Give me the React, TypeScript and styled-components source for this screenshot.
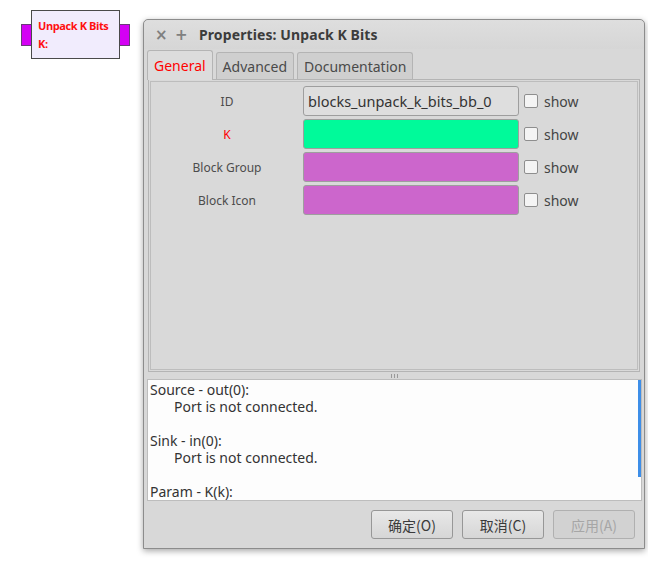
import styled, { createGlobalStyle } from 'styled-components';

const GlobalStyle = createGlobalStyle`
    html, body {
        margin: 0;
        padding: 0;
        background: #ffffff;
    }
    body {
        font-family: "Noto Sans", "Noto Sans CJK SC", sans-serif;
    }
`;

const Canvas = styled.div`
    position: relative;
    width: 648px;
    height: 569px;
    overflow: hidden;
    background: #ffffff;
`;

const Block = styled.div`
    position: absolute;
    left: 21px;
    top: 10px;
    display: flex;
    align-items: center;
`;

const Port = styled.div`
    width: 11px;
    height: 22px;
    background: #d400f4;
    border: 1px solid #6a3a7a;
    box-sizing: border-box;
`;

const BlockBody = styled.div`
    width: 89px;
    height: 49px;
    box-sizing: border-box;
    margin: 0 -1px;
    background: #f1ecfd;
    border: 1px solid #4a4a4a;
    padding: 6px 0 0 6px;
    font-family: "Open Sans", sans-serif;
    font-weight: 700;
    font-size: 11px;
    line-height: 18px;
    letter-spacing: -0.4px;
    color: #ff1010;
    position: relative;
    z-index: 1;
`;

const Dialog = styled.div`
    position: absolute;
    left: 143px;
    top: 19px;
    width: 502px;
    height: 530px;
    box-sizing: border-box;
    border: 1px solid #8c8c8c;
    border-radius: 5px 5px 0 0;
    background: #d8d8d8;
    box-shadow: 0 2px 6px rgba(0, 0, 0, 0.35);
    display: flex;
    flex-direction: column;
`;

const TitleBar = styled.div`
    height: 29px;
    display: flex;
    align-items: center;
    padding-left: 11px;
    background: linear-gradient(#dedede, #d6d6d6);
    border-radius: 5px 5px 0 0;
    color: #3c3c3c;
`;

const TitleButton = styled.span`
    width: 20px;
    font-size: 15px;
    font-family: "DejaVu Sans", sans-serif;
    color: #808080;
    font-weight: 700;
`;

const Title = styled.span`
    margin-left: 4px;
    font-weight: 700;
    font-size: 14px;
    letter-spacing: 0.1px;
`;

const Content = styled.div`
    flex: 1;
    display: flex;
    flex-direction: column;
    padding: 0 3px 0 3px;
`;

const TabRow = styled.div`
    display: flex;
    align-items: flex-end;
    gap: 3px;
    height: 30px;
`;

const Tab = styled.div<{ $active?: boolean }>`
    height: ${(p) => (p.$active ? 30 : 27)}px;
    box-sizing: border-box;
    padding: 0 6px;
    display: flex;
    align-items: center;
    border: 1px solid #b4b4b4;
    border-bottom: none;
    border-radius: 3px 3px 0 0;
    background: ${(p) => (p.$active ? '#dcdcdc' : '#cfcfcf')};
    color: ${(p) => (p.$active ? '#ff0000' : '#4a4a4a')};
    font-size: 14px;
    margin-bottom: ${(p) => (p.$active ? -1 : 0)}px;
    position: relative;
    z-index: ${(p) => (p.$active ? 2 : 1)};
`;

const Notebook = styled.div`
    height: 293px;
    box-sizing: border-box;
    margin: 0 1px;
    border: 1px solid #b4b4b4;
    padding: 1px;
    background: #d9d9d9;
`;

const NotebookInner = styled.div`
    height: 100%;
    box-sizing: border-box;
    border: 1px solid #bdbdbd;
    padding-top: 4px;
    display: flex;
    flex-direction: column;
    gap: 3px;
`;

const Row = styled.div`
    display: flex;
    align-items: center;
    height: 30px;
`;

const Label = styled.div<{ $error?: boolean }>`
    width: 152px;
    text-align: center;
    font-size: 12px;
    color: ${(p) => (p.$error ? '#ff0000' : '#4c4c4c')};
`;

const Entry = styled.div<{ $color?: string }>`
    width: 216px;
    height: 30px;
    box-sizing: border-box;
    border: 1px solid #9e9e9e;
    border-radius: 3px;
    background: ${(p) => p.$color ?? '#dedede'};
    display: flex;
    align-items: center;
    padding-left: 4px;
    font-size: 14.5px;
    color: #333333;
    white-space: nowrap;
    overflow: hidden;
`;

const Check = styled.span`
    width: 12px;
    height: 12px;
    margin-left: 5px;
    border: 1px solid #8e8e8e;
    border-radius: 2px;
    background: #f4f4f4;
`;

const ShowText = styled.span`
    margin-left: 6px;
    font-size: 14px;
    color: #444444;
`;

const PaneHandle = styled.div`
    height: 7px;
    display: flex;
    justify-content: center;
    align-items: center;
    gap: 2px;
`;

const Grip = styled.span`
    width: 1px;
    height: 4px;
    background: #9a9a9a;
`;

const TextView = styled.div`
    height: 122px;
    box-sizing: border-box;
    margin-right: -1px;
    border: 1px solid #bdbdbd;
    background: #fdfdfd;
    position: relative;
    padding: 1px 0 0 2px;
    font-size: 14px;
    line-height: 17px;
    color: #333333;
    overflow: hidden;
`;

const Line = styled.div<{ $indent?: boolean }>`
    height: 17px;
    padding-left: ${(p) => (p.$indent ? 24 : 0)}px;
    white-space: nowrap;
`;

const Scroll = styled.div`
    position: absolute;
    right: 0;
    top: 0;
    width: 3px;
    height: 97px;
    background: #3d8ee8;
`;

const ButtonRow = styled.div`
    display: flex;
    justify-content: flex-end;
    gap: 9px;
    padding: 9px 6px 0 0;
`;

const Button = styled.div<{ $disabled?: boolean }>`
    width: 82px;
    height: 29px;
    box-sizing: border-box;
    border: 1px solid ${(p) => (p.$disabled ? '#b0b0b0' : '#979797')};
    border-radius: 3px;
    background: ${(p) => (p.$disabled ? '#d2d2d2' : 'linear-gradient(#e8e8e8, #d6d6d6)')};
    display: flex;
    align-items: center;
    justify-content: center;
    font-size: 14px;
    font-family: "Noto Sans CJK SC", "Noto Sans", sans-serif;
    color: ${(p) => (p.$disabled ? '#a6a6a6' : '#3a3a3a')};
`;

const rows = [
    { label: 'ID', value: 'blocks_unpack_k_bits_bb_0' },
    { label: 'K', color: '#00fa9a', error: true },
    { label: 'Block Group', color: '#cc66cc' },
    { label: 'Block Icon', color: '#cc66cc' },
];

const lines = [
    { text: 'Source - out(0):' },
    { text: 'Port is not connected.', indent: true },
    { text: '' },
    { text: 'Sink - in(0):' },
    { text: 'Port is not connected.', indent: true },
    { text: '' },
    { text: 'Param - K(k):' },
];

const App = () => (
    <Canvas>
        <GlobalStyle />
        <Block>
            <Port />
            <BlockBody>
                <div>Unpack K Bits</div>
                <div>K:</div>
            </BlockBody>
            <Port />
        </Block>
        <Dialog>
            <TitleBar>
                <TitleButton>×</TitleButton>
                <TitleButton>+</TitleButton>
                <Title>Properties: Unpack K Bits</Title>
            </TitleBar>
            <Content>
                <TabRow>
                    <Tab $active>General</Tab>
                    <Tab>Advanced</Tab>
                    <Tab>Documentation</Tab>
                </TabRow>
                <Notebook>
                    <NotebookInner>
                        {rows.map((row) => (
                            <Row key={row.label}>
                                <Label $error={row.error}>{row.label}</Label>
                                <Entry $color={row.color}>{row.value}</Entry>
                                <Check />
                                <ShowText>show</ShowText>
                            </Row>
                        ))}
                    </NotebookInner>
                </Notebook>
                <PaneHandle>
                    <Grip />
                    <Grip />
                    <Grip />
                </PaneHandle>
                <TextView>
                    {lines.map((line, index) => (
                        <Line key={index} $indent={line.indent}>{line.text}</Line>
                    ))}
                    <Scroll />
                </TextView>
                <ButtonRow>
                    <Button>确定(O)</Button>
                    <Button>取消(C)</Button>
                    <Button $disabled>应用(A)</Button>
                </ButtonRow>
            </Content>
        </Dialog>
    </Canvas>
);

export default App;
